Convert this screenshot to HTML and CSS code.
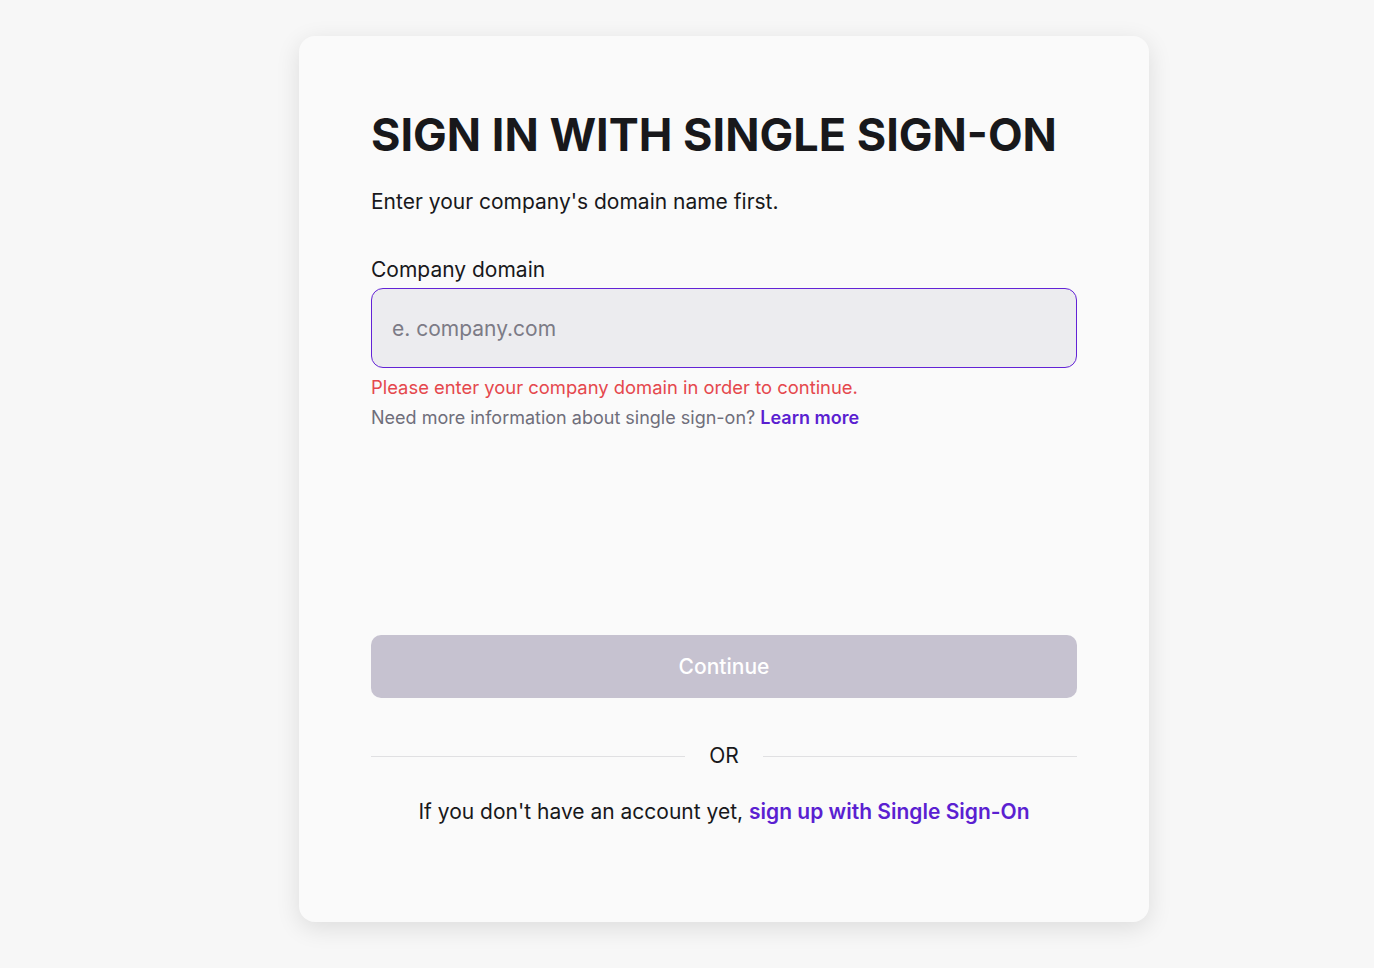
FILE: index.html
```html
<!DOCTYPE html>
<html lang="en">
<head>
    <meta charset="UTF-8">
    <meta name="viewport" content="width=device-width, initial-scale=1.0">
    <title>Sign in with Single Sign-On</title>
    <link rel="stylesheet" href="styles.css">
</head>
<body>
    <main class="page">
        <section class="card">
            <h1 class="title">SIGN IN WITH SINGLE SIGN-ON</h1>
            <p class="intro">Enter your company's domain name first.</p>

            <form class="sso-form">
                <label class="label" for="domain">Company domain</label>
                <input type="text" id="domain" class="input" placeholder="e. company.com" autofocus>
                <p class="error">Please enter your company domain in order to continue.</p>
                <p class="help">Need more information about single sign-on? <a href="#" class="link">Learn more</a></p>

                <button type="button" class="btn-continue" disabled>Continue</button>
            </form>

            <div class="divider"><span>OR</span></div>

            <p class="signup">If you don't have an account yet, <a href="#" class="link">sign up with Single Sign-On</a></p>
        </section>
    </main>
</body>
</html>
```

FILE: styles.css
```css
/* Reset */
* {
    margin: 0;
    padding: 0;
    box-sizing: border-box;
}

body {
    background-color: #f7f7f7;
    font-family: Inter, 'Noto Sans', Arial, sans-serif;
    color: #18181b;
}

.page {
    padding: 36px 0 40px 299px;
}

/* Card */
.card {
    width: 850px;
    min-height: 886px;
    padding: 70px 72px 0 72px;
    background-color: #fafafa;
    border-radius: 16px;
    box-shadow: 0 6px 24px rgba(0, 0, 0, 0.11);
}

.title {
    font-size: 45px;
    font-weight: 700;
    line-height: 58px;
    letter-spacing: 0;
    white-space: nowrap;
    color: #18181b;
}

.intro {
    margin-top: 23px;
    font-size: 21px;
    line-height: 30px;
}

/* Form */
.sso-form {
    display: flex;
    flex-direction: column;
    margin-top: 38px;
}

.label {
    font-size: 21px;
    line-height: 30px;
}

.input {
    height: 80px;
    margin-top: 3px;
    padding: 0 20px;
    background-color: #ececef;
    border: 1px solid #6323d6;
    border-radius: 12px;
    font-family: inherit;
    font-size: 21px;
    color: #18181b;
    caret-color: #18181b;
    outline: none;
}

.input::placeholder {
    color: #7c7b86;
}

.error {
    margin-top: 7px;
    font-size: 18.4px;
    line-height: 24px;
    color: #e5484d;
}

.help {
    margin-top: 7px;
    font-size: 18px;
    line-height: 24px;
    color: #6f6e7a;
}

.link {
    color: #5b1fd1;
    font-weight: 600;
    text-decoration: none;
}

.btn-continue {
    height: 63px;
    margin-top: 205px;
    background-color: #c6c2d0;
    border: none;
    border-radius: 10px;
    font-family: inherit;
    font-size: 21px;
    font-weight: 500;
    color: #fff;
}

/* OR divider */
.divider {
    display: flex;
    align-items: center;
    gap: 24px;
    margin-top: 46px;
    font-size: 21px;
    line-height: 24px;
}

.divider::before,
.divider::after {
    content: "";
    flex: 1;
    height: 1px;
    background-color: #e0e0e2;
}

.signup {
    margin-top: 29px;
    font-size: 21px;
    line-height: 30px;
    text-align: center;
}
```
